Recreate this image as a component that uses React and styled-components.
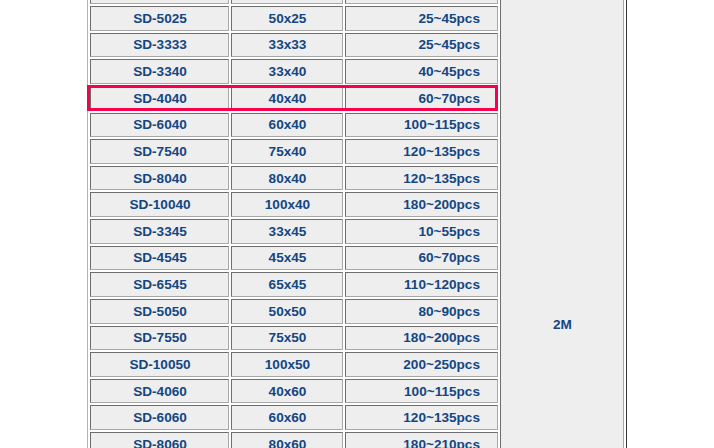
import React from "react";
import styled, { createGlobalStyle } from "styled-components";

const GlobalStyle = createGlobalStyle`
  html, body {
    margin: 0;
    padding: 0;
    background: #ffffff;
    overflow: hidden;
  }
  body {
    font-family: "Liberation Sans", Arial, sans-serif;
  }
`;

const Page = styled.div`
  display: flex;
  justify-content: center;
  height: 448px;
`;

const Table = styled.div`
  display: grid;
  grid-template-columns: 139px 112px 153px 124px;
  grid-auto-rows: 24.625px;
  gap: 2px;
  padding: 2px;
  margin-top: -76.875px;
  align-self: flex-start;
  border: 1px solid;
  border-color: #b4b4b4 #3c3c3c #3c3c3c #b4b4b4;
  background: #ffffff;
`;

const Cell = styled.div`
  grid-row: ${(p) => p.$row} / span ${(p) => p.$span || 1};
  grid-column: ${(p) => p.$col};
  display: flex;
  align-items: center;
  justify-content: ${(p) =>
    p.$align === "right" ? "flex-end" : "center"};
  padding-right: ${(p) => (p.$align === "right" ? "17px" : "0")};
  padding-left: ${(p) => (p.$align === "right" ? "0" : "1px")};
  background: #eeeeee;
  border: 1px solid;
  border-color: #6d6d6d #a8a8a8 #a8a8a8 #6d6d6d;
  color: #134683;
  font-size: 13.6px;
  font-weight: bold;
  white-space: nowrap;
  box-sizing: border-box;
`;

const Highlight = styled.div`
  grid-row: ${(p) => p.$row};
  grid-column: 1 / 4;
  margin: -1px 0 0 -3px;
  border: 3px solid #f8004c;
  z-index: 1;
  pointer-events: none;
`;

const rows = [
  ["SD-2525", "25x25", "10~15pcs"],
  ["SD-3025", "30x25", "15~25pcs"],
  ["SD-4025", "40x25", "20~30pcs"],
  ["SD-5025", "50x25", "25~45pcs"],
  ["SD-3333", "33x33", "25~45pcs"],
  ["SD-3340", "33x40", "40~45pcs"],
  ["SD-4040", "40x40", "60~70pcs"],
  ["SD-6040", "60x40", "100~115pcs"],
  ["SD-7540", "75x40", "120~135pcs"],
  ["SD-8040", "80x40", "120~135pcs"],
  ["SD-10040", "100x40", "180~200pcs"],
  ["SD-3345", "33x45", "10~55pcs"],
  ["SD-4545", "45x45", "60~70pcs"],
  ["SD-6545", "65x45", "110~120pcs"],
  ["SD-5050", "50x50", "80~90pcs"],
  ["SD-7550", "75x50", "180~200pcs"],
  ["SD-10050", "100x50", "200~250pcs"],
  ["SD-4060", "40x60", "100~115pcs"],
  ["SD-6060", "60x60", "120~135pcs"],
  ["SD-8060", "80x60", "180~210pcs"],
  ["SD-10060", "100x60", "200~250pcs"],
  ["SD-5070", "50x70", "120~135pcs"],
  ["SD-7070", "70x70", "150~180pcs"],
  ["SD-10070", "100x70", "220~260pcs"],
  ["SD-6080", "60x80", "150~180pcs"],
  ["SD-8080", "80x80", "200~230pcs"],
  ["SD-10080", "100x80", "250~300pcs"],
  ["SD-8090", "80x90", "230~260pcs"],
  ["SD-10090", "100x90", "280~320pcs"],
  ["SD-100100", "100x100", "300~350pcs"],
];

const HIGHLIGHT = "SD-4040";

export default function App() {
  return (
    <>
      <GlobalStyle />
      <Page>
        <Table>
          {rows.map(([code, size, qty], i) => (
            <React.Fragment key={code}>
              <Cell $row={i + 1} $col={1}>{code}</Cell>
              <Cell $row={i + 1} $col={2}>{size}</Cell>
              <Cell $row={i + 1} $col={3} $align="right">{qty}</Cell>
              {code === HIGHLIGHT && <Highlight $row={i + 1} />}
            </React.Fragment>
          ))}
          <Cell $row={1} $span={rows.length} $col={4}>2M</Cell>
        </Table>
      </Page>
    </>
  );
}
